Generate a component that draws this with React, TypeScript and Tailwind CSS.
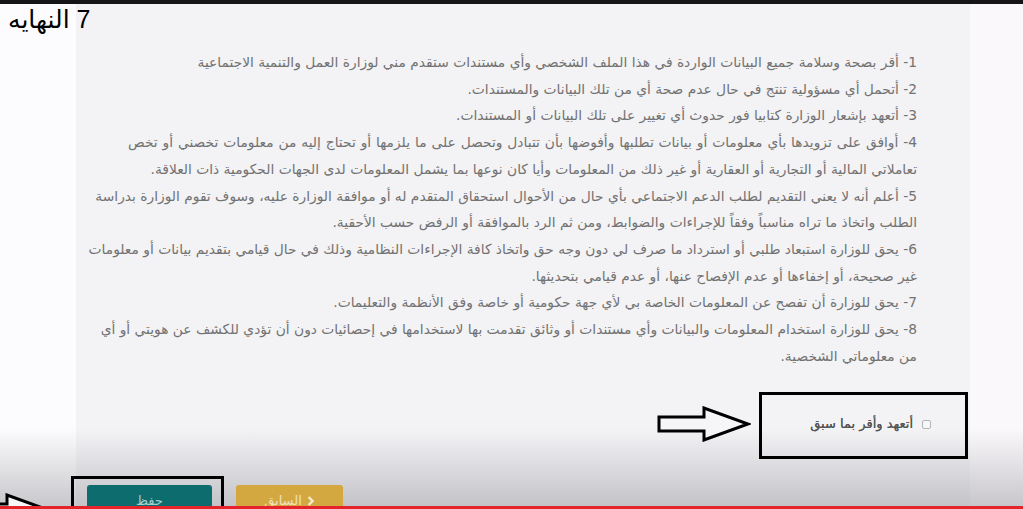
import React from 'react';

// Terms lines, split exactly where the page wraps them
const terms: { text: string; full?: boolean }[] = [
    { text: '1- أقر بصحة وسلامة جميع البيانات الواردة في هذا الملف الشخصي وأي مستندات ستقدم مني لوزارة العمل والتنمية الاجتماعية' },
    { text: '2- أتحمل أي مسؤولية تنتج في حال عدم صحة أي من تلك البيانات والمستندات.' },
    { text: '3- أتعهد بإشعار الوزارة كتابيا فور حدوث أي تغيير على تلك البيانات أو المستندات.' },
    { text: '4- أوافق على تزويدها بأي معلومات أو بيانات تطلبها وأفوضها بأن تتبادل وتحصل على ما يلزمها أو تحتاج إليه من معلومات تخصني أو تخص', full: true },
    { text: 'تعاملاتي المالية أو التجارية أو العقارية أو غير ذلك من المعلومات وأيا كان نوعها بما يشمل المعلومات لدى الجهات الحكومية ذات العلاقة.' },
    { text: '5- أعلم أنه لا يعني التقديم لطلب الدعم الاجتماعي بأي حال من الأحوال استحقاق المتقدم له أو موافقة الوزارة عليه، وسوف تقوم الوزارة بدراسة', full: true },
    { text: 'الطلب واتخاذ ما تراه مناسباً وفقاً للإجراءات والضوابط، ومن ثم الرد بالموافقة أو الرفض حسب الأحقية.' },
    { text: '6- يحق للوزارة استبعاد طلبي أو استرداد ما صرف لي دون وجه حق واتخاذ كافة الإجراءات النظامية وذلك في حال قيامي بتقديم بيانات أو معلومات', full: true },
    { text: 'غير صحيحة، أو إخفاءها أو عدم الإفصاح عنها، أو عدم قيامي بتحديثها.' },
    { text: '7- يحق للوزارة أن تفصح عن المعلومات الخاصة بي لأي جهة حكومية أو خاصة وفق الأنظمة والتعليمات.' },
    { text: '8- يحق للوزارة استخدام المعلومات والبيانات وأي مستندات أو وثائق تقدمت بها لاستخدامها في إحصائيات دون أن تؤدي للكشف عن هويتي أو أي', full: true },
    { text: 'من معلوماتي الشخصية.' },
];

// Outline arrow used by the annotations
const Arrow = ({ className }: { className: string }) => (
    <svg viewBox="0 0 94 36" className={className}>
        <path d="M2 11 H47 V2 L91 18 L47 34 V25 H2 Z" fill="#f6f6f8" stroke="#000" strokeWidth="3" strokeLinejoin="miter" />
    </svg>
);

const App: React.FC = () => {
    return (
        <div className="relative h-[509px] w-[1023px] overflow-hidden bg-[#fcfbfd] font-['DejaVu_Sans',sans-serif]">
            <div className="h-[4px] w-full bg-[#151515]"></div>

            <div className="flex h-[505px]">
                <div className="w-[76px] bg-[#fcfbfd]"></div>

                <div dir="rtl" className="flex w-[894px] flex-col overflow-hidden bg-[#f3f2f5] pt-[45px]">
                    <div className="pl-[52px] pr-[53px] text-[13.8px] leading-[26.7px] text-[#727272]">
                        {terms.map((line, i) => (
                            <div
                                key={i}
                                className={line.full ? 'whitespace-nowrap [text-align-last:justify]' : 'whitespace-nowrap'}
                            >
                                {line.text}
                            </div>
                        ))}
                    </div>

                    <div className="mt-[45px] flex items-center gap-[9px] pr-[39px] text-[13px] text-[#555]">
                        <span className="h-[9px] w-[9px] shrink-0 rounded-[2px] border border-[#b5b5b5] bg-[#f7f7f7]"></span>
                        <span className="[text-shadow:0_0_0.4px_#555]">أتعهد وأقر بما سبق</span>
                    </div>

                    <div className="relative z-10 mt-[51px] flex gap-[24px] pl-[11px]" dir="ltr">
                        <div className="flex h-[36px] w-[125px] items-start justify-center rounded-[3px] bg-[#0d6c6e] pt-[8px] text-[13px] leading-[16px] text-[#a9cfcf]">
                            حفظ
                        </div>
                        <div className="flex h-[36px] w-[107px] items-start justify-center gap-[5px] rounded-[3px] bg-[#d4a840] pt-[8px] text-[13px] leading-[16px] text-[#f1e0b8]">
                            <span dir="rtl">السابق</span>
                            <svg viewBox="0 0 10 14" className="mt-[2px] h-[12px] w-[8px]">
                                <path d="M2 2 L7 7 L2 12" fill="none" stroke="#f7ecd0" strokeWidth="3" />
                            </svg>
                        </div>
                    </div>
                </div>

                <div className="flex-1 bg-[#fbf8fb]"></div>
            </div>

            {/* video vignette at the bottom */}
            <div className="pointer-events-none absolute bottom-0 left-0 h-[80px] w-full bg-gradient-to-b from-transparent to-[#9a9aa0]/55"></div>

            {/* annotations drawn over the page */}
            <div className="absolute left-[8px] top-[4px] text-[25px] leading-[30px] text-black font-['Liberation_Sans','DejaVu_Sans',sans-serif]" dir="rtl">
                7 النهايه
            </div>
            <div className="absolute left-[759px] top-[392px] h-[67px] w-[209px] border-[3px] border-black"></div>
            <Arrow className="absolute left-[657px] top-[406px] h-[36px] w-[94px]" />
            <div className="absolute left-[71px] top-[476px] z-20 h-[40px] w-[153px] border-[3px] border-black"></div>
            <Arrow className="absolute left-[-40px] top-[493px] h-[36px] w-[94px]" />

            <div className="absolute bottom-0 left-0 z-30 h-[3px] w-full bg-[#e4232b]"></div>
        </div>
    );
};

export default App;
